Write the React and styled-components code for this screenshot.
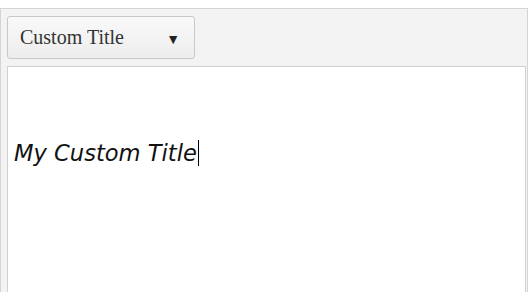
import styled, { createGlobalStyle } from "styled-components";

const Global = createGlobalStyle`
  html, body { margin: 0; padding: 0; background: #fff; }
  body { padding-top: 8px; overflow: hidden; }
`;

const Frame = styled.div`
  box-sizing: border-box;
  width: 528px;
  height: 284px;
  border: 1px solid #d4d4d4;
  border-bottom: none;
  background: #f3f3f3;
  padding: 0 1px 0 6px;
  display: flex;
  flex-direction: column;
`;

const Toolbar = styled.div`
  display: flex;
  align-items: center;
  height: 57px;
`;

const Dropdown = styled.button`
  box-sizing: border-box;
  width: 188px;
  height: 43px;
  padding: 0 14px 0 12px;
  display: flex;
  align-items: center;
  justify-content: space-between;
  border: 1px solid #c8c8c8;
  border-radius: 3px;
  background: linear-gradient(#f9f9f9, #ededed);
  font-family: "Liberation Serif", serif;
  font-size: 20px;
  color: #333;
  cursor: pointer;
`;

const Arrow = styled.span`
  font-size: 14px;
  color: #222;
  margin-top: 4px;
`;

const Editor = styled.div`
  flex: 1;
  background: #fff;
  border: 1px solid #d0d0d0;
  border-bottom: none;
  padding: 73px 6px 0;
`;

const Title = styled.div`
  font-family: "DejaVu Sans", Verdana, sans-serif;
  font-style: italic;
  font-size: 22.6px;
  color: #111;
  display: flex;
  align-items: center;
`;

const Caret = styled.span`
  display: inline-block;
  width: 1px;
  height: 26px;
  background: #000;
  margin-left: 1px;
`;

export default function App() {
  return (
    <>
      <Global />
      <Frame>
        <Toolbar>
          <Dropdown>
            Custom Title
            <Arrow>▼</Arrow>
          </Dropdown>
        </Toolbar>
        <Editor>
          <Title>
            My Custom Title
            <Caret />
          </Title>
        </Editor>
      </Frame>
    </>
  );
}
